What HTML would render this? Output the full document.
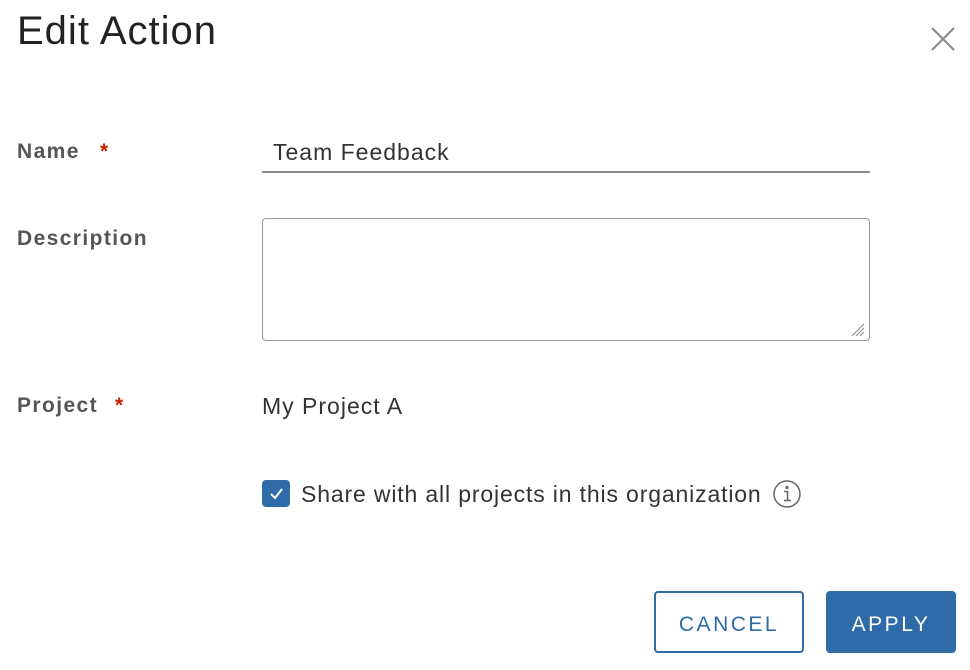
<!DOCTYPE html>
<html><head><meta charset="utf-8"><style>
html,body{margin:0;padding:0;background:#fff;width:970px;height:670px;overflow:hidden;font-family:"Liberation Sans",sans-serif;color:#333;}
.a{position:absolute;}
h1{position:absolute;left:17px;top:9px;margin:0;font-size:40px;font-weight:normal;color:#222;letter-spacing:1px;}
.lbl{font-size:21px;font-weight:bold;color:#555;letter-spacing:1.4px;}
.star{color:#c92100;position:absolute;}
.txt{font-size:23px;color:#333;letter-spacing:1px;}
.btn{position:absolute;top:591px;height:62px;box-sizing:border-box;border-radius:4px;font-size:21px;letter-spacing:2.5px;display:flex;align-items:center;justify-content:center;padding-top:6px;}
</style></head><body>
<h1>Edit Action</h1>
<svg class="a" style="left:930px;top:26px" width="26" height="26" viewBox="0 0 26 26"><path d="M2 2L24 24M24 2L2 24" stroke="#888" stroke-width="2"/></svg>

<div class="a lbl" style="left:17px;top:140px">Name</div><div class="a lbl star" style="left:100px;top:140px">*</div>
<div class="a txt" style="left:273px;top:139px">Team Feedback</div>
<div class="a" style="left:262px;top:171px;width:608px;height:2px;background:#8c8c8c"></div>

<div class="a lbl" style="left:17px;top:227px">Description</div>
<div class="a" style="left:262px;top:218px;width:608px;height:123px;box-sizing:border-box;border:1.5px solid #999;border-radius:4px"></div>
<svg class="a" style="left:848px;top:320px" width="18" height="18"><path d="M16 4L4 16M16 8L8 16M16 12L12 16" stroke="#888" stroke-width="1"/></svg>

<div class="a lbl" style="left:17px;top:394px">Project</div><div class="a lbl star" style="left:115px;top:394px">*</div>
<div class="a txt" style="left:262px;top:393px">My Project A</div>

<div class="a" style="left:262px;top:480px;width:28px;height:27px;background:#2f6ba8;border-radius:4px"></div>
<svg class="a" style="left:262px;top:480px" width="28" height="27"><path d="M9 14L13 18L20 9" stroke="#fff" stroke-width="2" fill="none"/></svg>
<div class="a txt" style="left:301px;top:481px;letter-spacing:0.85px">Share with all projects in this organization</div>
<svg class="a" style="left:772px;top:479px" width="30" height="30" viewBox="0 0 30 30"><circle cx="15" cy="15" r="13" fill="none" stroke="#666" stroke-width="1.5"/><circle cx="15" cy="8.5" r="1.6" fill="#666"/><path d="M12 12.5H15.5V21M12 21.5H19" stroke="#666" stroke-width="1.6" fill="none"/></svg>

<div class="btn" style="left:654px;width:150px;border:2px solid #2f6ba8;color:#2f6ba8;background:#fff">CANCEL</div>
<div class="btn" style="left:826px;width:130px;background:#2f6ba8;color:#fff">APPLY</div>
</body></html>
